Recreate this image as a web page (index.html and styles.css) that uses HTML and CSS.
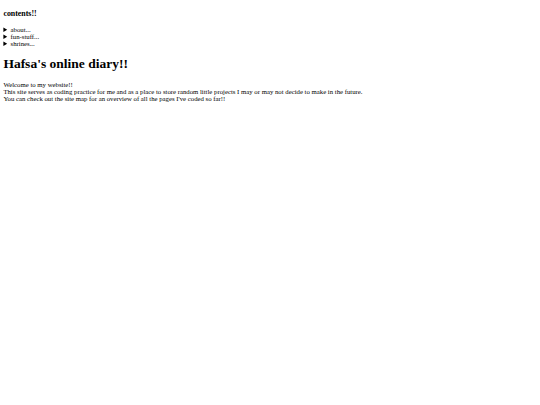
FILE: index.html
```html
<!DOCTYPE html>
<html>
<head>
<meta charset="utf-8">
<link rel="stylesheet" href="styles.css">
</head>
<body class="page">
<h3 class="nav-title">contents!!</h3>
<details class="menu"><summary>about...</summary></details>
<details class="menu"><summary>fun-stuff...</summary></details>
<details class="menu"><summary>shrines...</summary></details>
<h1 class="title">Hafsa's online diary!!</h1>
<p class="intro">Welcome to my website!!<br>This site serves as coding practice for me and as a place to store random little projects I may or may not decide to make in the future.<br>You can check out the site map for an overview of all the pages I've coded so far!!</p>
</body>
</html>
```
FILE: styles.css
```css
html { background: #fff; }
.page {
  margin: 3.375px;
  font-family: "Liberation Serif", serif;
  font-size: 6.75px;
  color: #000;
}
.nav-title {
  font-size: 7.9px;
  margin: 5.6px 0 7.9px;
  font-weight: bold;
}
.menu { display: block; }
.title {
  font-size: 13.5px;
  margin: 9.0px 0;
  font-weight: bold;
}
.intro { margin: 6.75px 0; }
```
